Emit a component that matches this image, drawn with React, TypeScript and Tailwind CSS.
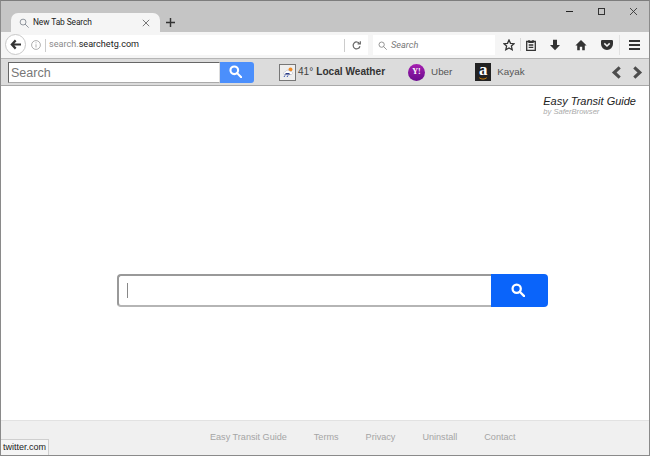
import React from 'react';

const sans = 'font-["Liberation_Sans",Arial,sans-serif]';
const ui = 'font-["Roboto","Noto_Sans",sans-serif]';

function SearchGlass({ className, stroke = '#fff', width = 2.6 }: { className: string; stroke?: string; width?: number }) {
  return (
    <svg viewBox="0 0 16 16" className={className} fill="none" stroke={stroke} strokeWidth={width}>
      <circle cx="6.5" cy="6.5" r="4.7" />
      <path d="M10 10l5 5" strokeLinecap="round" />
    </svg>
  );
}

function Chevron({ dir }: { dir: 'left' | 'right' }) {
  return (
    <svg viewBox="0 0 12 14" className="w-[11px] h-[13px]" fill="none" stroke="#4d4d4d" strokeWidth="3.4">
      <path d={dir === 'left' ? 'M9.5 1.5L3.5 7l6 5.5' : 'M2.5 1.5L8.5 7l-6 5.5'} />
    </svg>
  );
}

function TitleBar() {
  return (
    <div className="h-[31px] bg-[#c5c5c5] flex items-end pl-[10px] shrink-0">
      {/* tab */}
      <div className="relative w-[149px] h-[19px] bg-[#f5f5f5] rounded-t-[7px] flex items-center pl-[8px] pr-[9px]">
        <SearchGlass className="w-[10px] h-[10px]" stroke="#8a9099" width={1.5} />
        <span className={`ml-[4px] text-[8.4px] tracking-[-0.1px] text-[#222] ${ui}`}>New Tab Search</span>
        <svg viewBox="0 0 10 10" className="w-[8px] h-[8px] ml-auto mr-[1px]" stroke="#666" strokeWidth="1.1">
          <path d="M1 1l8 8M9 1l-8 8" />
        </svg>
      </div>
      <svg viewBox="0 0 10 10" className="w-[9px] h-[9px] ml-[6px] mb-[5px]" stroke="#333" strokeWidth="1.6">
        <path d="M5 0v10M0 5h10" />
      </svg>
      {/* window buttons */}
      <div className="ml-auto self-start flex items-center pt-[7px] pr-[12px]">
        <div className="w-[7px] h-px bg-[#222] mr-[25px]" />
        <div className="w-[7px] h-[7px] border border-[#333] mr-[25px]" />
        <svg viewBox="0 0 8 8" className="w-[7px] h-[7px]" stroke="#333" strokeWidth="1">
          <path d="M0 0l8 8M8 0L0 8" />
        </svg>
      </div>
    </div>
  );
}

function NavBar() {
  return (
    <div className="h-[27px] bg-[#f5f5f5] border-b border-[#b5b5b5] flex items-center relative shrink-0">
      <div className="absolute left-[4px] top-[2px] w-[21px] h-[21px] rounded-full bg-white border border-[#c8c8c8] flex items-center justify-center">
        <svg viewBox="0 0 12 12" className="w-[11px] h-[11px]" fill="none" stroke="#333" strokeWidth="2.4">
          <path d="M6.2 1.5L2 6l4.2 4.5M2.5 6H12" />
        </svg>
      </div>
      {/* url bar */}
      <div className="ml-[14px] w-[353px] h-[20px] bg-white flex items-center pl-[16px]">
        <svg viewBox="0 0 10 10" className="w-[10px] h-[10px]" fill="none" stroke="#9a9a9a" strokeWidth="0.8">
          <circle cx="5" cy="5" r="4.4" />
          <path d="M5 4.3v3.2M5 2.3v1" />
        </svg>
        <div className="w-px h-[13px] bg-[#ccc] ml-[4px]" />
        <span className={`ml-[3px] text-[9.1px] text-[#222] ${ui}`}>
          <span className="text-[#8a8a8a]">search.</span>searchetg.com
        </span>
        <div className="w-px h-[13px] bg-[#ccc] ml-auto" />
        <svg viewBox="0 0 12 12" className="w-[9px] h-[9px] mx-[7px]" fill="none" stroke="#666" strokeWidth="1.6">
          <path d="M10 3.4A4.6 4.6 0 1 0 10.6 7" />
          <path d="M7.5 3.8h3.6V.4" />
        </svg>
      </div>
      {/* search bar */}
      <div className="ml-[5px] w-[122px] h-[20px] bg-white flex items-center pl-[5px]">
        <SearchGlass className="w-[9px] h-[9px]" stroke="#8a8a8a" width={1.6} />
        <span className={`ml-[4px] text-[9.2px] italic text-[#777] ${ui}`}>Search</span>
      </div>
      {/* toolbar icons */}
      <div className="relative flex-1 h-full">
        <svg viewBox="0 0 12 12" className="absolute left-[8px] top-[7px] w-[12px] h-[12px]" fill="none" stroke="#333" strokeWidth="1.3">
          <path d="M6 1l1.5 3.3 3.6.4-2.7 2.4.8 3.6L6 8.9l-3.2 1.8.8-3.6L.9 4.7l3.6-.4z" />
        </svg>
        <div className="absolute left-[25px] top-[6px] w-px h-[13px] bg-[#d8d8d8]" />
        <svg viewBox="0 0 12 12" className="absolute left-[30px] top-[7px] w-[12px] h-[12px]" fill="none" stroke="#333" strokeWidth="1.3">
          <path d="M1.7 2.5h8.6v8.8H1.7zM4 1v2.4h4V1M3.7 6h4.6M3.7 8.3h4.6" />
        </svg>
        <svg viewBox="0 0 12 12" className="absolute left-[54px] top-[7px] w-[12px] h-[12px]" fill="#333">
          <path d="M4 .8h4V6h3L6 11.2 1 6h3z" />
        </svg>
        <svg viewBox="0 0 12 12" className="absolute left-[80px] top-[7px] w-[12px] h-[12px]" fill="#333">
          <path d="M6 1L.4 6.4h1.8v4.8h2.6V7.8h2.4v3.4h2.6V6.4h1.8z" />
        </svg>
        <svg viewBox="0 0 12 12" className="absolute left-[106px] top-[7px] w-[12px] h-[12px]">
          <path d="M1.5 1h9A1.3 1.3 0 0 1 12 2.3V5A6 6 0 0 1 0 5V2.3A1.3 1.3 0 0 1 1.5 1z" fill="#333" />
          <path d="M3.3 4.4L6 7l2.7-2.6" fill="none" stroke="#f5f5f5" strokeWidth="1.5" />
        </svg>
        <div className="absolute left-[124px] top-[3px] w-px h-[20px] bg-[#e2e2e2]" />
        <div className="absolute left-[134px] top-[8px] w-[11px] flex flex-col gap-[2px]">
          <div className="h-[2px] bg-[#333]" />
          <div className="h-[2px] bg-[#333]" />
          <div className="h-[2px] bg-[#333]" />
        </div>
      </div>
    </div>
  );
}

function ExtensionBar() {
  return (
    <div className={`h-[27px] bg-[#dcdcdc] border-b border-[#a9a9a9] flex items-center pl-[7px] pr-[6px] shrink-0 ${sans}`}>
      <div className="w-[212px] h-[21px] bg-white border-t border-l border-[#666] border-r border-r-[#ddd] border-b border-b-[#aaa] flex items-center pl-[2px] pt-[3px]">
        <span className="text-[12.5px] text-[#777]">Search</span>
      </div>
      <div className="w-[34px] h-[21px] bg-[#4b8ffc] rounded-r-[3px] flex items-center justify-center pr-[3px] pb-[1px]">
        <SearchGlass className="w-[13px] h-[13px]" />
      </div>
      <div className="w-[17px] h-[17px] ml-[25px] bg-[#eee] border border-[#777] flex items-center justify-center">
        <svg viewBox="0 0 12 12" className="w-[12px] h-[12px]">
          <circle cx="8.5" cy="3.5" r="2" fill="#ef8a22" />
          <path d="M2 8.5a2 2 0 0 1 1.5-3A2.6 2.6 0 0 1 8 5.5 1.6 1.6 0 0 1 9.5 8.5z" fill="#fff" stroke="#99a" strokeWidth="0.4" />
          <path d="M2.5 8.5h6L7 7H4z" fill="#2b3f8a" />
          <path d="M2 11l1-1.6M5 11l1-1.6" stroke="#3352b0" strokeWidth="1" />
        </svg>
      </div>
      <span className="ml-[2px] text-[10.1px] text-[#444]">41°</span>
      <span className="ml-[3px] text-[10.1px] font-bold text-[#333] whitespace-nowrap">Local Weather</span>
      <div className="w-[17px] h-[17px] ml-[23px] rounded-full bg-gradient-to-b from-[#a61fb0] to-[#6a0a8e] flex items-center justify-center">
        <span className="text-[8px] font-bold text-white font-['Liberation_Serif',serif]">Y!</span>
      </div>
      <span className="ml-[6px] text-[9.8px] text-[#555]">Uber</span>
      <div className="w-[16px] h-[18px] ml-[23px] bg-[#222] flex flex-col items-center justify-start">
        <span className="text-[17px] leading-[14px] font-bold text-white font-['Liberation_Serif',serif]">a</span>
        <svg viewBox="0 0 12 4" className="w-[12px] h-[3px]" fill="none" stroke="#f90" strokeWidth="1">
          <path d="M1 1c3 2.4 7 2.4 10 0" />
        </svg>
      </div>
      <span className="ml-[6px] text-[9.8px] text-[#555]">Kayak</span>
      <div className="ml-auto flex items-center gap-[10px]">
        <Chevron dir="left" />
        <Chevron dir="right" />
      </div>
    </div>
  );
}

export default function App() {
  return (
    <div className={`relative w-[650px] h-[456px] overflow-hidden flex flex-col border border-[#8a8a8a] border-t-[#7d7d7d] bg-white ${sans}`}>
      <TitleBar />
      <NavBar />
      <ExtensionBar />

      <main className="flex-1 flex flex-col">
        <div className="self-end pt-[10px] pr-[13px] leading-none">
          <div className="text-[11px] italic text-[#222]">Easy Transit Guide</div>
          <div className="text-[7.6px] italic text-[#aaa] mt-px">by SaferBrowser</div>
        </div>
        <div className="mt-[158px] ml-[116px] w-[431px] h-[33px] flex">
          <div className="flex-1 bg-white border-2 border-r-0 border-[#999] border-b-[#b5b5b5] rounded-l-[4px] flex items-center pl-[8px]">
            <div className="w-px h-[15px] bg-[#888]" />
          </div>
          <div className="w-[57px] bg-[#0a64fa] rounded-r-[4px] flex items-center justify-center pr-[3px] pb-[1px]">
            <SearchGlass className="w-[14px] h-[14px]" />
          </div>
        </div>
      </main>

      <footer className="h-[35px] bg-[#f0f0f0] border-t border-[#e2e2e2] flex items-center pl-[209px] pb-[1px] gap-[27px] text-[9.1px] text-[#a5a5a5] shrink-0">
        <span>Easy Transit Guide</span>
        <span>Terms</span>
        <span>Privacy</span>
        <span>Uninstall</span>
        <span>Contact</span>
      </footer>

      {/* status tooltip */}
      <div className="absolute left-0 bottom-0 w-[48px] h-[16px] bg-[#f5f5f5] border-t border-r border-[#cfcfcf] flex items-center pl-[2px] text-[9px] text-[#222]">
        twitter.com
      </div>
    </div>
  );
}
